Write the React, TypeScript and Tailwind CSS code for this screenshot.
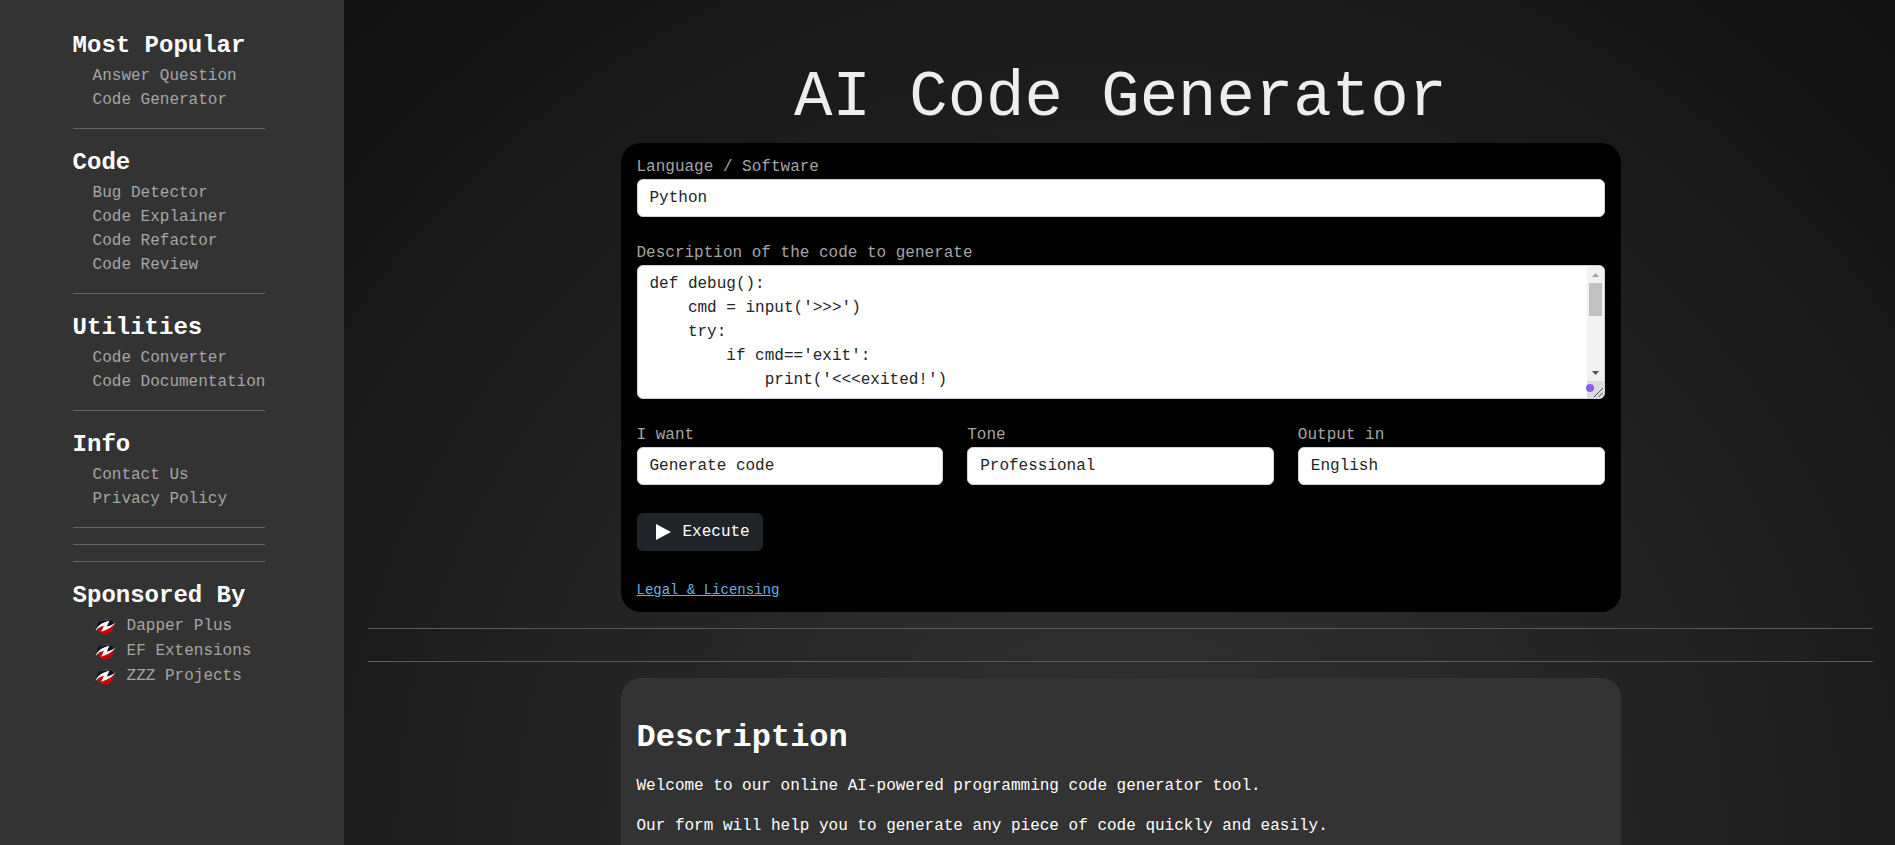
import React, { useRef } from 'react';

const font = "font-['Liberation_Mono',monospace]";

const sections: { title: string; links: string[] }[] = [
  { title: 'Most Popular', links: ['Answer Question', 'Code Generator'] },
  { title: 'Code', links: ['Bug Detector', 'Code Explainer', 'Code Refactor', 'Code Review'] },
  { title: 'Utilities', links: ['Code Converter', 'Code Documentation'] },
  { title: 'Info', links: ['Contact Us', 'Privacy Policy'] },
];

const sponsors = ['Dapper Plus', 'EF Extensions', 'ZZZ Projects'];

const snippet = `def debug():
    cmd = input('>>>')
    try:
        if cmd=='exit':
            print('<<<exited!')
            exit()
        else:
            print(eval(cmd))
    except Exception as e:
        print(e)
    debug()

def main():
    debug()

main()
`;

function ZLogo() {
  return (
    <svg viewBox="0 0 21 17" className="h-[17px] w-[21px] shrink-0" aria-hidden="true">
      <path d="M1.600 9.500 C2.500 3.500 6 .4 10.500 .4 C14 .4 16.800 2 18.200 4.600 L18.600 7 L12 9 L9 5 L5 7Z" fill="#12121e" />
      <path d="M4.500 3.600 C7.500 .2 13 -.2 16.200 2.400 C12 1.800 8 2.200 4.500 3.600Z" fill="#50505a" />
      <path d="M2.600 11 L8 7.500 L12 10 L18.800 7 C18.500 12.800 15 16.600 10.600 16.600 C6.800 16.600 3.600 14.500 2.600 11Z" fill="#c80606" />
      <path d="M.6 13 C2 8.500 6.500 4.400 14.400 2.800 L11.800 8.600 C15 8 18 6.600 20.600 4.600 C17.500 9 14 11 6.200 13.800 L9 7.800 C5.500 8.400 2.500 10.400 .6 13Z" fill="#fff" />
    </svg>
  );
}

function Field({ id, label, value }: { id: string; label: string; value: string }) {
  return (
    <div className="min-w-0 flex-1">
      <label htmlFor={id} className="block text-[#a5a5a5]">{label}</label>
      <input
        id={id}
        defaultValue={value}
        className="block h-[38px] w-full rounded-md border border-[#ced4da] bg-white px-3 text-[#212529]"
      />
    </div>
  );
}

function DescriptionBox() {
  const box = useRef<HTMLTextAreaElement>(null);
  const scroll = (amount: number) => box.current?.scrollBy({ top: amount });
  return (
    <div className="relative flex h-[134px] overflow-hidden rounded-md border border-[#ced4da] bg-white">
      <textarea
        id="description"
        ref={box}
        defaultValue={snippet}
        className="my-1.5 min-w-0 flex-1 resize-none pl-3 whitespace-pre text-[#212529] outline-none [scrollbar-width:none]"
      />
      <div className="flex w-[17px] flex-col bg-[#f1f1f1]">
        <button type="button" aria-label="Scroll up" onClick={() => scroll(-24)} className="flex h-[17px] items-center justify-center">
          <svg viewBox="0 0 7 4" className="h-1 w-[7px]"><path d="M0 4 3.500 0 7 4Z" fill="#a3a3a3" /></svg>
        </button>
        <div className="mx-0.5 h-[33px] bg-[#c1c1c1]" />
        <div className="flex-1" />
        <button type="button" aria-label="Scroll down" onClick={() => scroll(24)} className="flex h-[17px] items-center justify-center">
          <svg viewBox="0 0 7 4" className="h-1 w-[7px]"><path d="M0 0 3.500 4 7 0Z" fill="#505050" /></svg>
        </button>
        <div className="flex h-[17px] items-end justify-end bg-[#dcdcdc]">
          <svg viewBox="0 0 9 9" className="mr-px mb-px h-[9px] w-[9px]">
            <path d="M0 9 9 0M4.500 9 9 4.500" stroke="#505050" fill="none" />
          </svg>
        </div>
      </div>
      <span className="absolute right-2.5 bottom-1.5 h-2 w-2 rounded-full bg-[#8b5cf0]" />
    </div>
  );
}

function NavHeading({ children }: { children: React.ReactNode }) {
  return <h2 className="mb-1 pt-1 text-2xl leading-7 font-bold text-white">{children}</h2>;
}

export default function App() {
  return (
    <div className={`flex h-screen overflow-hidden bg-[#111] text-base leading-6 ${font}`}>
      <aside className="flex w-[344px] shrink-0 justify-center overflow-hidden bg-[#333] pt-7">
        <nav className="-ml-1.5">
          {sections.map((s) => (
            <section key={s.title}>
              <NavHeading>{s.title}</NavHeading>
              <ul className="pl-5">
                {s.links.map((l) => (
                  <li key={l}>
                    <a href="#" className="text-[#a5a5a5]">{l}</a>
                  </li>
                ))}
              </ul>
              <hr className="my-4 border-[#666]" />
            </section>
          ))}
          <hr className="mb-4 border-[#666]" />
          <hr className="mb-4 border-[#666]" />
          <NavHeading>Sponsored By</NavHeading>
          <ul className="pl-[22px]">
            {sponsors.map((s) => (
              <li key={s}>
                <a href="#" className="flex items-center gap-[11px] leading-[25px] text-[#a5a5a5]">
                  <ZLogo />
                  {s}
                </a>
              </li>
            ))}
          </ul>
        </nav>
      </aside>
      <main className="min-w-0 flex-1 overflow-hidden bg-[radial-gradient(circle_at_50%_100%,#333,#111)] pt-15 pr-[22px] pl-6">
        <h1 className="mb-1.5 text-center text-[64px] leading-[77px] text-[#eee]">AI Code Generator</h1>
        <form className="mx-auto max-w-[1000px] rounded-[20px] bg-black px-4 pt-3 pb-3" onSubmit={(e) => e.preventDefault()}>
          <Field id="language" label="Language / Software" value="Python" />
          <div className="mt-6">
            <label htmlFor="description" className="block text-[#a5a5a5]">Description of the code to generate</label>
            <DescriptionBox />
          </div>
          <div className="mt-6 flex gap-6">
            <Field id="want" label="I want" value="Generate code" />
            <Field id="tone" label="Tone" value="Professional" />
            <Field id="output" label="Output in" value="English" />
          </div>
          <button type="submit" className="mt-7 flex h-[38px] items-center gap-3 rounded-md bg-[#212529] pr-[13px] pl-[19px] text-white">
            <svg viewBox="0 0 15 16" className="h-4 w-[15px]" aria-hidden="true">
              <path d="M0 0 15 8 0 16Z" fill="#fff" />
            </svg>
            Execute
          </button>
          <a href="#" className="mt-[29px] block w-fit text-sm text-[#6ab0e8] underline">Legal &amp; Licensing</a>
        </form>
        <hr className="mt-4 border-[#5a5a5a]" />
        <hr className="mt-8 mb-4 border-[#5a5a5a]" />
        <article className="mx-auto max-w-[1000px] rounded-[20px] bg-[#333] px-4 pt-10 pb-10 text-white">
          <h2 className="mb-4 text-[32px] leading-10 font-bold">Description</h2>
          <p className="mb-4">Welcome to our online AI-powered programming code generator tool.</p>
          <p className="mb-4">Our form will help you to generate any piece of code quickly and easily.</p>
        </article>
      </main>
    </div>
  );
}
